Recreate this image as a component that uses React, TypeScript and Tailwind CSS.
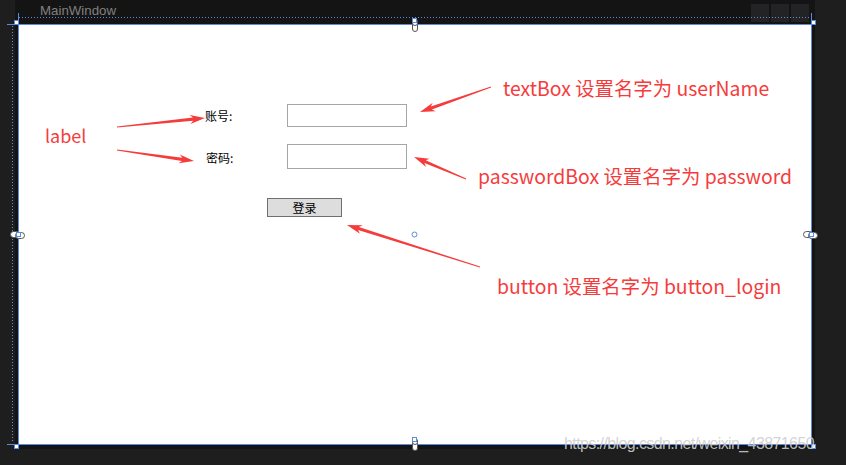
import React from 'react';

const RED = '#f53c3c';
const BLUE = '#5b8be0';

type Pt = [number, number];

// tapered annotation arrow: thin at the tail, thick at the head
function arrowPoints(tail: Pt, tip: Pt) {
  const [x1, y1] = tail;
  const [x2, y2] = tip;
  const dx = x2 - x1;
  const dy = y2 - y1;
  const len = Math.hypot(dx, dy);
  const ux = dx / len;
  const uy = dy / len;
  const nx = -uy;
  const ny = ux;
  const headLen = 15;
  const headW = 4.5;
  const shaftTail = 0.4;
  const shaftHead = 1.6;
  const bx = x2 - ux * headLen;
  const by = y2 - uy * headLen;
  const sx = bx + ux * 3;
  const sy = by + uy * 3;
  const pts: Pt[] = [
    [x1 + nx * shaftTail, y1 + ny * shaftTail],
    [sx + nx * shaftHead, sy + ny * shaftHead],
    [bx + nx * headW, by + ny * headW],
    [x2, y2],
    [bx - nx * headW, by - ny * headW],
    [sx - nx * shaftHead, sy - ny * shaftHead],
    [x1 - nx * shaftTail, y1 - ny * shaftTail],
  ];
  return pts.map((p) => `${p[0].toFixed(1)},${p[1].toFixed(1)}`).join(' ');
}

const arrows: [Pt, Pt][] = [
  [[117, 127], [205, 118]],
  [[117, 150], [194, 161]],
  [[491, 87], [420, 112]],
  [[466, 179], [414, 157]],
  [[480, 267], [347, 225]],
];

function LinkHandle({ vertical }: { vertical: boolean }) {
  if (vertical) {
    return (
      <svg width="8" height="16" viewBox="0 0 8 16">
        <rect x="1.5" y="5.5" width="5" height="9" rx="2.5" fill="white" stroke="#555" strokeWidth="1" />
        <rect x="1.5" y="2.5" width="5" height="6" rx="2.5" fill="white" stroke="#555" strokeWidth="1" />
        <rect x="1.5" y="1.5" width="4" height="4" fill="white" stroke={BLUE} strokeWidth="1" />
      </svg>
    );
  }
  return (
    <svg width="16" height="9" viewBox="0 0 16 9">
      <rect x="0.5" y="1.5" width="9" height="6" rx="3" fill="white" stroke="#555" strokeWidth="1" />
      <rect x="5.5" y="2.5" width="9" height="6" rx="3" fill="white" stroke="#555" strokeWidth="1" />
      <rect x="6.5" y="2.5" width="4" height="4" fill="white" stroke={BLUE} strokeWidth="1" />
    </svg>
  );
}

export default function App() {
  const cjk = { fontFamily: '"Noto Sans CJK SC", "Noto Sans", sans-serif' };
  return (
    <div className="relative w-[846px] h-[465px] bg-[#1e1e1e] overflow-hidden">
      {/* window frame */}
      <div className="ml-[15px] w-[800px] h-[449px] bg-[#141414] flex flex-col">
        <div className="h-[24px] flex items-start justify-between">
          <span
            className="ml-[25px] mt-[3px] text-[13.3px] leading-[16px] text-[#808080]"
            style={{ fontFamily: '"Liberation Sans", Arial, sans-serif' }}
          >
            MainWindow
          </span>
          <div className="flex gap-[2px] mt-[4px] mr-[6px]">
            <div className="w-[18px] h-[18px] bg-[#232326]" />
            <div className="w-[18px] h-[18px] bg-[#232326]" />
            <div className="w-[18px] h-[18px] bg-[#232326]" />
          </div>
        </div>

        {/* design surface */}
        <div className="ml-[3px] w-[794px] h-[421px] bg-white border border-[#5b8be0]">
          <div className="pl-[186px] pt-[79px] text-[12px] text-black" style={cjk}>
            <div className="flex items-center h-[23px]">
              <span className="w-[82px] leading-none">账号:</span>
              <div className="w-[120px] h-[23px] border border-[#a6a6a6]" />
            </div>
            <div className="flex items-center h-[25px] mt-[17px]">
              <span className="w-[82px] pl-[1px] leading-none pt-[2px]">密码:</span>
              <div className="w-[120px] h-[25px] border border-[#a6a6a6]" />
            </div>
            <div className="ml-[62px] mt-[29px] w-[75px] h-[19px] bg-[#dddddd] border border-[#707070] flex items-center justify-center leading-none">
              登录
            </div>
          </div>
        </div>
      </div>

      {/* designer adorners and annotations */}
      <svg className="absolute left-0 top-0" width="846" height="465">
        <line x1="19" y1="17.5" x2="811" y2="17.5" stroke={BLUE} strokeWidth="1" strokeDasharray="1 2" />
        <line x1="12.5" y1="26" x2="12.5" y2="443" stroke={BLUE} strokeWidth="1" strokeDasharray="1 2" />
        <line x1="18.5" y1="13" x2="18.5" y2="25" stroke={BLUE} strokeWidth="1" />
        <line x1="811.5" y1="13" x2="811.5" y2="25" stroke={BLUE} strokeWidth="1" />
        <line x1="7" y1="24.5" x2="19" y2="24.5" stroke={BLUE} strokeWidth="1" />
        <line x1="7" y1="444.5" x2="19" y2="444.5" stroke={BLUE} strokeWidth="1" />
        <rect x="14.5" y="20.5" width="4" height="4" fill="white" stroke={BLUE} />
        <rect x="811.5" y="20.5" width="4" height="4" fill="white" stroke={BLUE} />
        <rect x="14.5" y="444.5" width="4" height="4" fill="white" stroke={BLUE} />
        <rect x="811.5" y="444.5" width="4" height="4" fill="white" stroke={BLUE} />
        <circle cx="414.5" cy="234.5" r="2.5" fill="white" stroke={BLUE} />
        {arrows.map(([a, b], i) => (
          <polygon key={i} points={arrowPoints(a, b)} fill={RED} />
        ))}
      </svg>

      <div className="absolute left-[411px] top-[17px]">
        <LinkHandle vertical />
      </div>
      <div className="absolute left-[411px] top-[436px]">
        <LinkHandle vertical />
      </div>
      <div className="absolute left-[10px] top-[230px]">
        <LinkHandle vertical={false} />
      </div>
      <div className="absolute left-[803px] top-[230px]">
        <LinkHandle vertical={false} />
      </div>

      <div
        className="absolute left-0 top-0 w-[846px] h-[465px] text-[19.4px] leading-none whitespace-nowrap pointer-events-none"
        style={{ ...cjk, color: RED }}
      >
        <span className="absolute left-[45px] top-[126px] text-[18px]">label</span>
        <span className="absolute left-[503px] top-[78px]">textBox 设置名字为 userName</span>
        <span className="absolute left-[478px] top-[166px]">passwordBox 设置名字为 password</span>
        <span className="absolute left-[497px] top-[276px]">button 设置名字为 button_login</span>
      </div>

      <div
        className="absolute left-[564px] top-[436px] text-[16px] leading-none tracking-[-0.6px] text-[#cfcfcf]/90 whitespace-nowrap"
        style={{ fontFamily: '"Liberation Sans", Arial, sans-serif' }}
      >
        https://blog.csdn.net/weixin_43871650
      </div>
    </div>
  );
}
